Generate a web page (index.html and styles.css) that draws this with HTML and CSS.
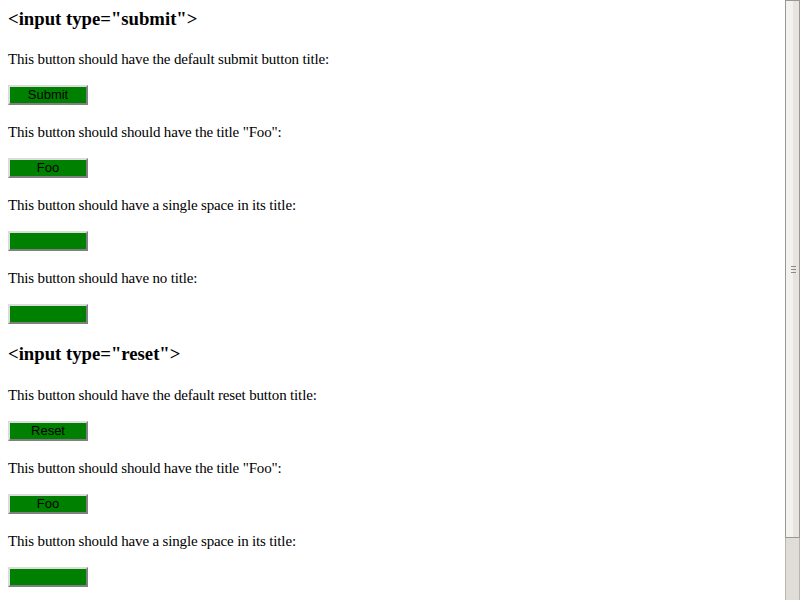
FILE: index.html
```html
<!DOCTYPE html>
<html>
<head>
<meta charset="utf-8">
<link rel="stylesheet" href="styles.css">
</head>
<body>
<div class="page">
  <h3 class="title first">&lt;input type="submit"&gt;</h3>
  <p class="desc">This button should have the default submit button title:</p>
  <div class="row"><button class="btn">Submit</button></div>
  <p class="desc">This button should should have the title "Foo":</p>
  <div class="row"><button class="btn">Foo</button></div>
  <p class="desc">This button should have a single space in its title:</p>
  <div class="row"><button class="btn">&nbsp;</button></div>
  <p class="desc">This button should have no title:</p>
  <div class="row"><button class="btn"></button></div>
  <h3 class="title">&lt;input type="reset"&gt;</h3>
  <p class="desc">This button should have the default reset button title:</p>
  <div class="row"><button class="btn">Reset</button></div>
  <p class="desc">This button should should have the title "Foo":</p>
  <div class="row"><button class="btn">Foo</button></div>
  <p class="desc">This button should have a single space in its title:</p>
  <div class="row"><button class="btn">&nbsp;</button></div>
  <p class="desc">This button should have no title:</p>
  <div class="row"><button class="btn"></button></div>
</div>
<div class="scrollbar">
  <div class="thumb">
    <div class="grip"><span></span><span></span><span></span></div>
  </div>
  <div class="track"></div>
</div>
</body>
</html>
```
FILE: styles.css
```css
html, body {
  margin: 0;
  padding: 0;
  height: 600px;
  overflow: hidden;
  background: #ffffff;
}
body {
  display: flex;
  font-family: "Liberation Serif", "Times New Roman", serif;
  font-size: 16px;
  color: #000000;
}
.page {
  flex: 1;
  padding: 8px;
  overflow: hidden;
}
.title {
  font-size: 18.72px;
  font-weight: bold;
  margin: 17px 0 20.4px;
}
.title.first {
  margin-top: 0;
}
.desc {
  margin: 16px 0;
  font-size: 15px;
  line-height: 18px;
  letter-spacing: -0.16px;
}
.row {
  margin: 16px 0;
  height: 23px;
  padding-top: 1px;
  box-sizing: border-box;
}
.btn {
  display: block;
  width: 80px;
  height: 20px;
  margin: 0;
  padding: 0;
  box-sizing: border-box;
  background: #008000;
  border: 2px solid;
  border-color: #dcdcdc #808080 #808080 #dcdcdc;
  font-family: "Liberation Sans", Arial, sans-serif;
  font-size: 13px;
  color: #000000;
  text-align: center;
  line-height: 16px;
}
.scrollbar {
  width: 15px;
  flex: none;
  display: flex;
  flex-direction: column;
  background: #e0ddd8;
  border-left: 1px solid #b8b4ae;
  border-right: 1px solid #b8b4ae;
  box-sizing: border-box;
}
.thumb {
  height: 538px;
  box-sizing: border-box;
  border: 1px solid #9c9891;
  margin: 0 -1px;
  background: linear-gradient(to right, #f3f2ef 0, #f3f2ef 50%, #e7e3df 50%, #e7e3df 100%);
  display: flex;
  align-items: center;
  justify-content: center;
}
.grip {
  display: flex;
  flex-direction: column;
  gap: 2px;
  margin-left: 2px;
}
.grip span {
  display: block;
  width: 5px;
  height: 1px;
  background: #8c8882;
}
.track {
  flex: 1;
}
```
